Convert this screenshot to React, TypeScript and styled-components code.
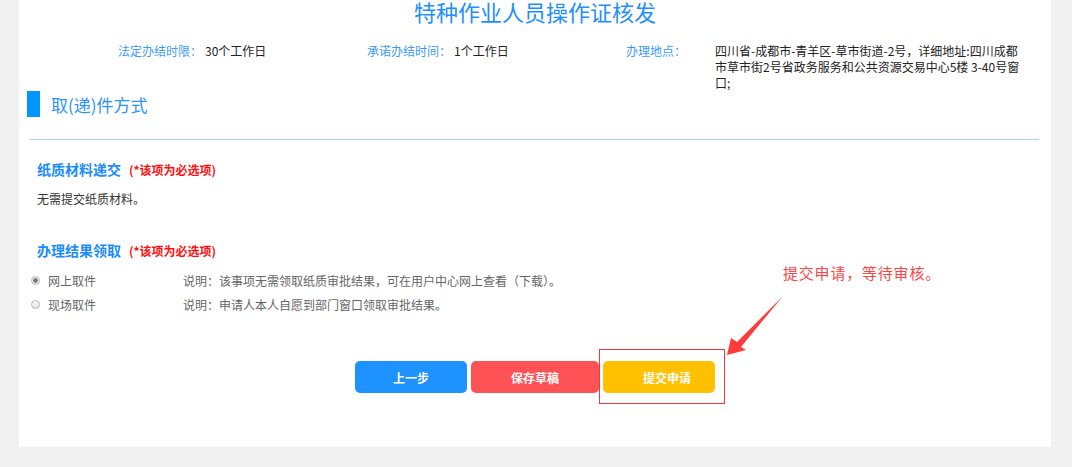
import React from "react";
import styled, { createGlobalStyle } from "styled-components";

const GlobalStyle = createGlobalStyle`
  html, body {
    margin: 0;
    padding: 0;
    background: #f1f1f1;
    font-family: "Noto Sans CJK SC", "Noto Sans", sans-serif;
  }
`;

const pickups = [
  { id: 1, title: "网上取件", note: "说明：该事项无需领取纸质审批结果，可在用户中心网上查看（下载）。", checked: true },
  { id: 2, title: "现场取件", note: "说明：申请人本人自愿到部门窗口领取审批结果。", checked: false },
];

const App = () => {
  return (
    <>
      <GlobalStyle />
      <Page>
        <Panel>
          <Title>特种作业人员操作证核发</Title>

          <InfoRow>
            <InfoItem $width={249}>
              <Label>法定办结时限：</Label>
              <Value $gap={3}>30个工作日</Value>
            </InfoItem>
            <InfoItem $width={259}>
              <Label>承诺办结时间：</Label>
              <Value $gap={3}>1个工作日</Value>
            </InfoItem>
            <InfoItem>
              <Label $width={89}>办理地点：</Label>
              <Value $width={312}>
                四川省-成都市-青羊区-草市街道-2号，详细地址:四川成都市草市街2号省政务服务和公共资源交易中心5楼 3-40号窗口;
              </Value>
            </InfoItem>
          </InfoRow>

          <SectionHead>
            <Bar />
            <SectionText>取(递)件方式</SectionText>
          </SectionHead>
          <Divider />

          <Block>
            <SubTitle>
              纸质材料递交<Required>(*该项为必选项)</Required>
            </SubTitle>
            <Plain>无需提交纸质材料。</Plain>
          </Block>

          <Block $top={31}>
            <SubTitle>
              办理结果领取<Required>(*该项为必选项)</Required>
            </SubTitle>
            <RadioList>
              {pickups.map((p) => (
                <RadioRow key={p.id}>
                  <Radio $checked={p.checked} />
                  <RadioLabel>{p.title}</RadioLabel>
                  <RadioNote>{p.note}</RadioNote>
                </RadioRow>
              ))}
            </RadioList>
          </Block>

          <Actions>
            <Button $bg="#1e92ff" $w={112}>上一步</Button>
            <Button $bg="#ff5256" $w={128}>保存草稿</Button>
            <Button $bg="#ffc000" $w={112} $shift={16}>提交申请</Button>
          </Actions>

          <Highlight />
          <Callout>提交申请，等待审核。</Callout>
          <Arrow viewBox="0 0 70 70" width="70" height="70">
            <polygon
              points="1,59 5,42 11,46 57,0 15,51 20,54"
              fill="#ff3b3b"
            />
          </Arrow>
        </Panel>
      </Page>
    </>
  );
};

export default App;

const Page = styled.div`
  width: 1072px;
  height: 467px;
  box-sizing: border-box;
  padding: 0 21px 0 19px;
`;

const Panel = styled.div`
  position: relative;
  height: 447px;
  background: #ffffff;
  overflow: hidden;
`;

const Title = styled.h1`
  margin: 0;
  text-align: center;
  font-size: 22px;
  font-weight: 400;
  line-height: 22px;
  color: #1e8fff;
`;

const InfoRow = styled.div`
  display: flex;
  margin-top: 21px;
  padding-left: 99px;
  font-size: 12px;
  line-height: 16px;
`;

const InfoItem = styled.div<{ $width?: number }>`
  display: flex;
  width: ${(p) => (p.$width ? `${p.$width}px` : "auto")};
`;

const Label = styled.span<{ $width?: number }>`
  flex: none;
  color: #3a9bff;
  width: ${(p) => (p.$width ? `${p.$width}px` : "auto")};
`;

const Value = styled.span<{ $width?: number; $gap?: number }>`
  color: #222;
  margin-left: ${(p) => p.$gap ?? 0}px;
  width: ${(p) => (p.$width ? `${p.$width}px` : "auto")};
`;

const SectionHead = styled.div`
  display: flex;
  align-items: center;
  height: 26px;
  padding-left: 8px;
`;

const Bar = styled.div`
  width: 13px;
  height: 26px;
  background: #0096ff;
`;

const SectionText = styled.span`
  margin-left: 11px;
  font-size: 17px;
  color: #2a93ff;
`;

const Divider = styled.div`
  height: 1px;
  margin: 22px 12px 0 11px;
  background: #a3d5ff;
`;

const Block = styled.div<{ $top?: number }>`
  margin-top: ${(p) => p.$top ?? 19}px;
  padding-left: 18px;
`;

const SubTitle = styled.div`
  font-size: 14px;
  font-weight: 700;
  line-height: 20px;
  color: #1a8cff;
`;

const Required = styled.span`
  margin-left: 8px;
  font-size: 12px;
  color: #ff1010;
`;

const Plain = styled.div`
  margin-top: 9px;
  font-size: 12px;
  line-height: 20px;
  color: #333;
`;

const RadioList = styled.div`
  margin-top: 7px;
  margin-left: -6px;
`;

const RadioRow = styled.div`
  display: flex;
  align-items: center;
  height: 24px;
  font-size: 12px;
  color: #666;
`;

const Radio = styled.span<{ $checked: boolean }>`
  width: 7px;
  height: 7px;
  border-radius: 50%;
  border: 1px solid #b5b5b5;
  background: ${(p) =>
    p.$checked
      ? "radial-gradient(circle, #777 0 2px, #f0f0f0 2.5px)"
      : "linear-gradient(#fafafa, #e6e6e6)"};
`;

const RadioLabel = styled.span`
  width: 135px;
  margin-left: 8px;
`;

const RadioNote = styled.span``;

const Actions = styled.div`
  display: flex;
  justify-content: center;
  gap: 4px;
  margin-top: 45px;
`;

const Button = styled.button<{ $bg: string; $w: number; $shift?: number }>`
  width: ${(p) => p.$w}px;
  height: 32px;
  padding: 0 0 0 ${(p) => p.$shift ?? 0}px;
  border: none;
  border-radius: 5px;
  background: ${(p) => p.$bg};
  color: #fff;
  font-family: inherit;
  font-size: 12px;
  font-weight: 700;
  cursor: pointer;
`;

const Highlight = styled.div`
  position: absolute;
  left: 580px;
  top: 349px;
  width: 124px;
  height: 53px;
  border: 1.5px solid #f03a3a;
`;

const Callout = styled.div`
  position: absolute;
  left: 764px;
  top: 263px;
  font-size: 15px;
  letter-spacing: 0.8px;
  line-height: 20px;
  color: #ff4444;
`;

const Arrow = styled.svg`
  position: absolute;
  left: 707px;
  top: 296px;
`;
